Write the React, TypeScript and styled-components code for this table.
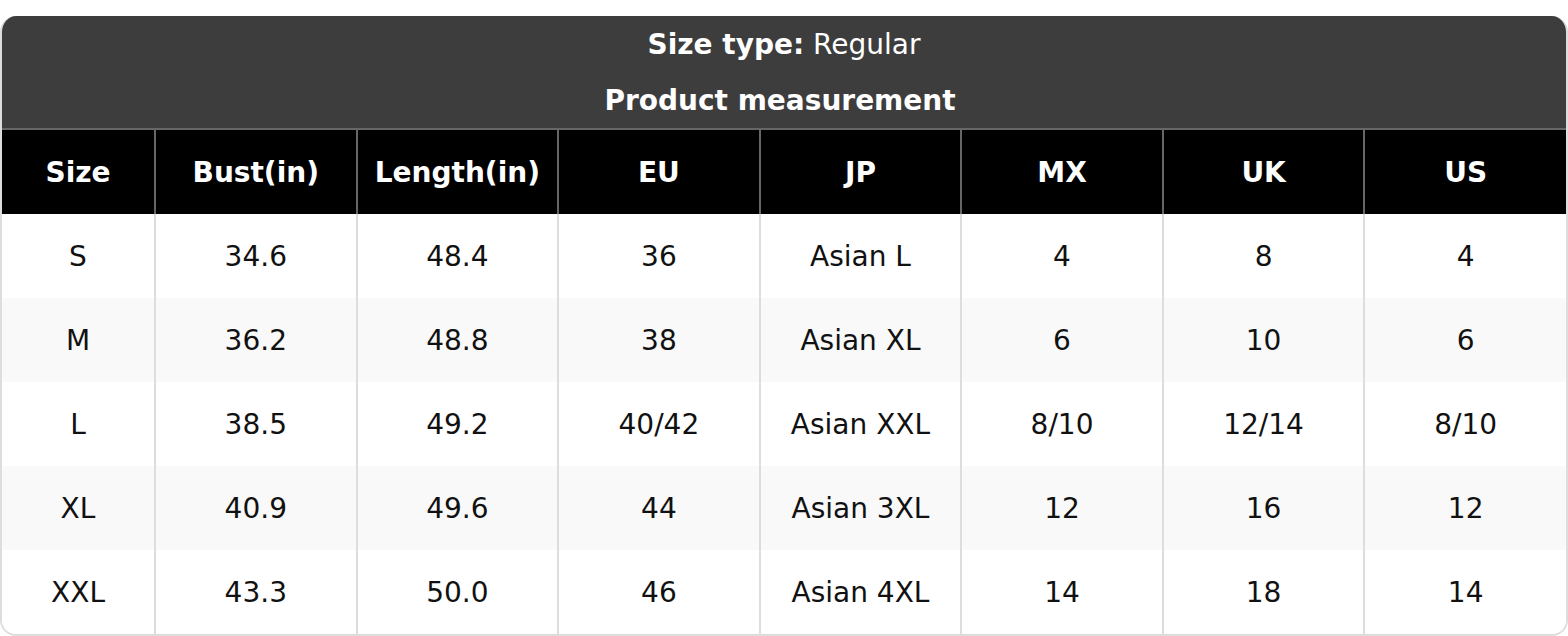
import styled, { createGlobalStyle } from 'styled-components'

const GlobalStyle = createGlobalStyle`
  html, body {
    margin: 0;
    padding: 0;
    background: #ffffff;
  }
  body {
    padding-top: 16px;
    font-family: "DejaVu Sans", "Liberation Sans", sans-serif;
    color: #111111;
  }
`;

const Card = styled.div`
  width: 1568px;
  box-sizing: border-box;
  border: 2px solid #dddddd;
  border-top: none;
  border-radius: 16px;
  overflow: hidden;
`;

const TitleBlock = styled.div`
  background: #3d3d3d;
  color: #ffffff;
  text-align: center;
`;

const TitleLine = styled.div<{ $shift?: number }>`
  height: 56px;
  line-height: 56px;
  font-size: 28px;
  padding-right: ${p => p.$shift ?? 0}px;
  padding-top: 1px;
  box-sizing: border-box;
`;

const Strong = styled.span`
  font-weight: 700;
`;

const Table = styled.table`
  width: 100%;
  border-collapse: collapse;
  table-layout: fixed;
  font-size: 28px;
`;

const HeadCell = styled.th<{ $last?: boolean }>`
  height: 84px;
  padding: 0;
  background: #000000;
  color: #ffffff;
  font-weight: 700;
  text-align: center;
  border-top: 2px solid #666666;
  border-right: ${p => (p.$last ? 'none' : '2px solid #666666')};
`;

const Row = styled.tr<{ $alt: boolean }>`
  background: ${p => (p.$alt ? '#f9f9f9' : '#ffffff')};
`;

const Cell = styled.td<{ $last?: boolean }>`
  height: 84px;
  padding: 0;
  text-align: center;
  border-right: ${p => (p.$last ? 'none' : '2px solid #dddddd')};
`;

const columns = ['Size', 'Bust(in)', 'Length(in)', 'EU', 'JP', 'MX', 'UK', 'US'];

const rows = [
  ['S', '34.6', '48.4', '36', 'Asian L', '4', '8', '4'],
  ['M', '36.2', '48.8', '38', 'Asian XL', '6', '10', '6'],
  ['L', '38.5', '49.2', '40/42', 'Asian XXL', '8/10', '12/14', '8/10'],
  ['XL', '40.9', '49.6', '44', 'Asian 3XL', '12', '16', '12'],
  ['XXL', '43.3', '50.0', '46', 'Asian 4XL', '14', '18', '14'],
];

const App = () => {
  return (
    <>
      <GlobalStyle />
      <Card>
        <TitleBlock>
          <TitleLine>
            <Strong>Size type:</Strong> Regular
          </TitleLine>
          <TitleLine $shift={8}>
            <Strong>Product measurement</Strong>
          </TitleLine>
        </TitleBlock>
        <Table>
          <colgroup>
            <col style={{ width: '153px' }} />
          </colgroup>
          <thead>
            <tr>
              {columns.map((c, i) => (
                <HeadCell key={c} $last={i === columns.length - 1}>{c}</HeadCell>
              ))}
            </tr>
          </thead>
          <tbody>
            {rows.map((r, ri) => (
              <Row key={r[0]} $alt={ri % 2 === 1}>
                {r.map((v, ci) => (
                  <Cell key={ci} $last={ci === r.length - 1}>{v}</Cell>
                ))}
              </Row>
            ))}
          </tbody>
        </Table>
      </Card>
    </>
  )
}

export default App;
